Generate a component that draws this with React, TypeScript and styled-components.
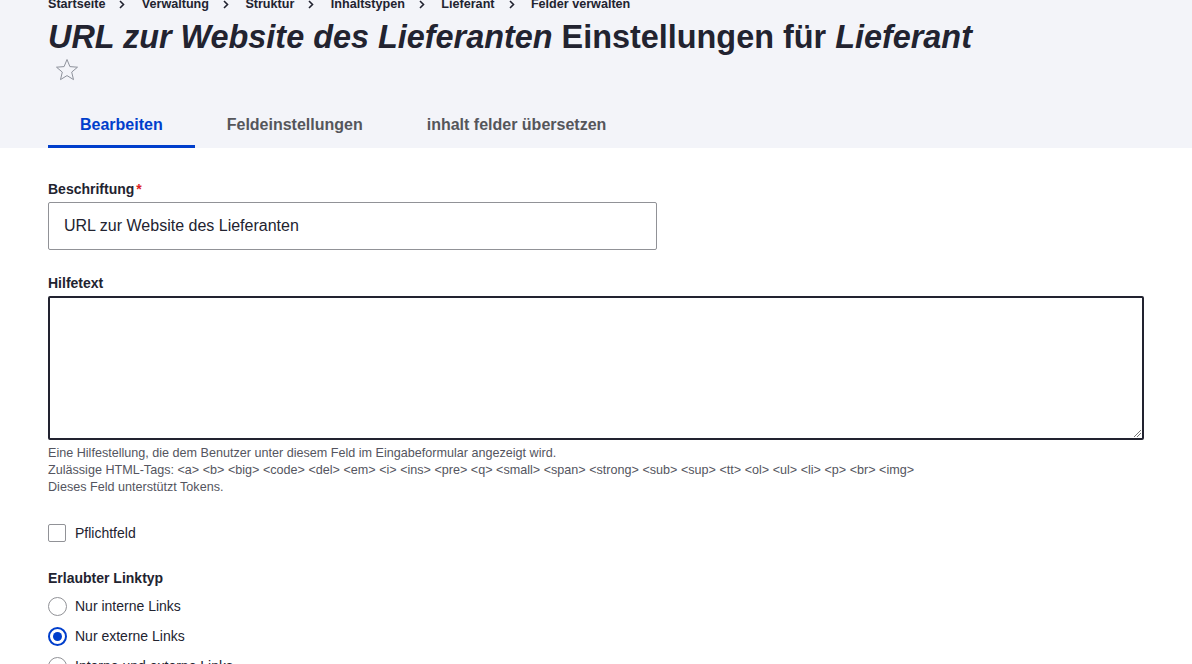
import React from "react";
import styled, { createGlobalStyle } from "styled-components";

const Global = createGlobalStyle`
  html, body { margin: 0; padding: 0; background: #fff; }
  body { font-family: "Liberation Sans", Arial, sans-serif; color: #222330; }
  * { box-sizing: border-box; }
`;

const Header = styled.header`
  background: #f3f4f9;
  padding: 0 48px;
  display: flex;
  flex-direction: column;
`;

const Breadcrumb = styled.nav`
  display: flex;
  align-items: center;
  height: 20px;
  margin-top: -6px;
  font-size: 12.6px;
  font-weight: 700;
  line-height: 20px;
  color: #222330;
`;

const Crumb = styled.span`
  display: inline-flex;
  align-items: center;
`;

const Sep = styled.svg`
  display: block;
  margin: 1px 16.4px 0 14px;
`;

const Title = styled.h1`
  margin: 3px 0 0;
  font-size: 32.4px;
  line-height: 40px;
  font-weight: 700;
  color: #222330;
  em { font-style: italic; }
`;

const StarIcon = styled.svg`
  display: block;
  margin: 1px 0 0 7px;
`;

const Tabs = styled.div`
  display: flex;
  margin-top: 20px;
`;

const Tab = styled.div<{ $active?: boolean }>`
  height: 46px;
  padding: 2px 32px 0;
  display: flex;
  align-items: center;
  font-size: 16px;
  font-weight: 700;
  color: ${(p) => (p.$active ? "#003ecc" : "#55565b")};
  border-bottom: 3px solid ${(p) => (p.$active ? "#003ecc" : "transparent")};
`;

const Main = styled.main`
  padding: 32px 48px 0;
`;

const Field = styled.div<{ $gap?: number }>`
  margin-bottom: ${(p) => p.$gap ?? 24}px;
`;

const Label = styled.div`
  font-size: 14px;
  font-weight: 700;
  line-height: 18px;
  margin-bottom: 4px;
`;

const Req = styled.span`
  color: #dc2323;
  margin-left: 2px;
`;

const Input = styled.div`
  width: 609px;
  height: 48px;
  border: 1px solid #919297;
  border-radius: 2px;
  padding: 0 15px;
  display: flex;
  align-items: center;
  font-size: 16px;
  color: #222330;
`;

const TextArea = styled.div`
  position: relative;
  width: 1096px;
  height: 144px;
  border: 2px solid #222330;
  border-radius: 2px;
`;

const Grip = styled.svg`
  position: absolute;
  right: 0;
  bottom: 0;
`;

const Desc = styled.div`
  margin-top: 5px;
  font-size: 12.6px;
  line-height: 17px;
  color: #545560;
`;

const CheckRow = styled.label<{ $gap?: number }>`
  display: flex;
  align-items: center;
  gap: ${(p) => p.$gap ?? 9}px;
  font-size: 14px;
  height: 30px;
`;

const Box = styled.span`
  width: 18px;
  height: 18px;
  border: 1px solid #919297;
  border-radius: 2px;
  display: inline-block;
`;

const Radio = styled.span<{ $checked?: boolean }>`
  width: 19px;
  height: 19px;
  border-radius: 50%;
  border: ${(p) => (p.$checked ? "2px solid #003ecc" : "1px solid #919297")};
  display: inline-flex;
  align-items: center;
  justify-content: center;
  &::after {
    content: "";
    display: ${(p) => (p.$checked ? "block" : "none")};
    width: 9px;
    height: 9px;
    border-radius: 50%;
    background: #003ecc;
  }
`;

const Radios = styled.div`
  display: flex;
  flex-direction: column;
`;

export default function App() {
  const crumbs = ["Startseite", "Verwaltung", "Struktur", "Inhaltstypen", "Lieferant", "Felder verwalten"];
  return (
    <>
      <Global />
      <Header>
        <Breadcrumb>
          {crumbs.map((c, i) => (
            <Crumb key={c}>
              {c}
              {i < crumbs.length - 1 && (
                <Sep width="6" height="9" viewBox="0 0 6 9">
                  <path d="M1 1 L4.5 4.5 L1 8" fill="none" stroke="#222330" strokeWidth="1.6" />
                </Sep>
              )}
            </Crumb>
          ))}
        </Breadcrumb>
        <Title>
          <em>URL zur Website des Lieferanten</em> Einstellungen für <em>Lieferant</em>
        </Title>
        <StarIcon width="24" height="24" viewBox="0 0 24 24">
          <path
            d="M12 1.5 L14.9 8.6 L22.5 9.2 L16.7 14.1 L18.5 21.6 L12 17.6 L5.5 21.6 L7.3 14.1 L1.5 9.2 L9.1 8.6 Z"
            fill="none"
            stroke="#8e929c"
            strokeWidth="1"
            strokeLinejoin="miter"
          />
        </StarIcon>
        <Tabs>
          <Tab $active>Bearbeiten</Tab>
          <Tab>Feldeinstellungen</Tab>
          <Tab>inhalt felder übersetzen</Tab>
        </Tabs>
      </Header>
      <Main>
        <Field>
          <Label>
            Beschriftung<Req>*</Req>
          </Label>
          <Input>URL zur Website des Lieferanten</Input>
        </Field>
        <Field $gap={22}>
          <Label>Hilfetext</Label>
          <TextArea>
            <Grip width="10" height="10" viewBox="0 0 10 10">
              <path d="M9 2 L2 9 M9 5 L5 9" stroke="#777" strokeWidth="1" />
            </Grip>
          </TextArea>
          <Desc>
            Eine Hilfestellung, die dem Benutzer unter diesem Feld im Eingabeformular angezeigt wird.
            <br />
            Zulässige HTML-Tags: &lt;a&gt; &lt;b&gt; &lt;big&gt; &lt;code&gt; &lt;del&gt; &lt;em&gt; &lt;i&gt; &lt;ins&gt; &lt;pre&gt; &lt;q&gt; &lt;small&gt; &lt;span&gt; &lt;strong&gt; &lt;sub&gt; &lt;sup&gt; &lt;tt&gt; &lt;ol&gt; &lt;ul&gt; &lt;li&gt; &lt;p&gt; &lt;br&gt; &lt;img&gt;
            <br />
            Dieses Feld unterstützt Tokens.
          </Desc>
        </Field>
        <Field $gap={21}>
          <CheckRow>
            <Box />
            Pflichtfeld
          </CheckRow>
        </Field>
        <Field>
          <Label>Erlaubter Linktyp</Label>
          <Radios>
            <CheckRow $gap={8}>
              <Radio />
              Nur interne Links
            </CheckRow>
            <CheckRow $gap={8}>
              <Radio $checked />
              Nur externe Links
            </CheckRow>
            <CheckRow $gap={8}>
              <Radio />
              Interne und externe Links
            </CheckRow>
          </Radios>
        </Field>
      </Main>
    </>
  );
}
